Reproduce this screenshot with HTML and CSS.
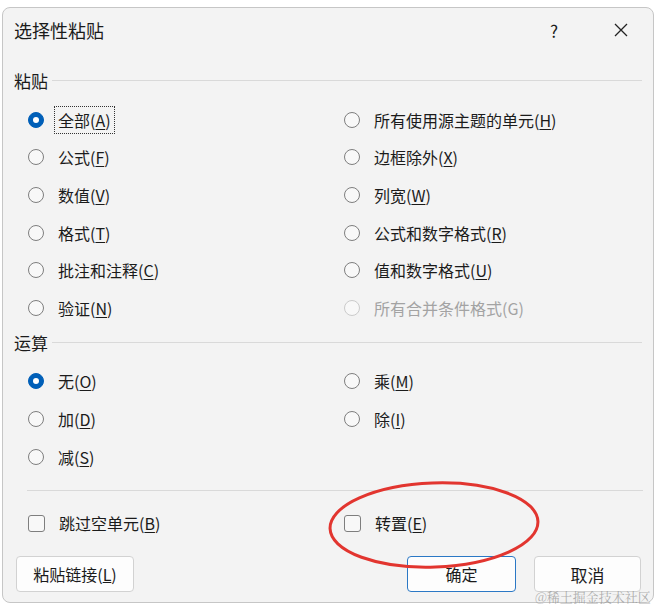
FILE: index.html
```html
<!DOCTYPE html>
<html lang="zh-CN">
<head>
  <meta charset="UTF-8" />
  <title>选择性粘贴</title>
  <link rel="stylesheet" href="styles.css">
</head>
<body>
  <div class="dialog">
    <!-- Title bar -->
    <div class="title-bar">
      <span class="title">选择性粘贴</span>
      <span class="help">?</span>
      <span class="close">
        <svg width="14" height="14" viewBox="0 0 14 14">
          <path d="M1 1 L13 13 M13 1 L1 13" stroke="#222" stroke-width="1.3" fill="none"/>
        </svg>
      </span>
    </div>

    <!-- Paste section -->
    <div class="section-head first">
      <span>粘贴</span>
      <div class="rule"></div>
    </div>
    <div class="options paste">
      <label class="opt"><span class="radio checked"></span><span class="focus">全部(<u>A</u>)</span></label>
      <label class="opt"><span class="radio"></span><span>所有使用源主题的单元(<u>H</u>)</span></label>
      <label class="opt"><span class="radio"></span><span>公式(<u>F</u>)</span></label>
      <label class="opt"><span class="radio"></span><span>边框除外(<u>X</u>)</span></label>
      <label class="opt"><span class="radio"></span><span>数值(<u>V</u>)</span></label>
      <label class="opt"><span class="radio"></span><span>列宽(<u>W</u>)</span></label>
      <label class="opt"><span class="radio"></span><span>格式(<u>T</u>)</span></label>
      <label class="opt"><span class="radio"></span><span>公式和数字格式(<u>R</u>)</span></label>
      <label class="opt"><span class="radio"></span><span>批注和注释(<u>C</u>)</span></label>
      <label class="opt"><span class="radio"></span><span>值和数字格式(<u>U</u>)</span></label>
      <label class="opt"><span class="radio"></span><span>验证(<u>N</u>)</span></label>
      <label class="opt disabled"><span class="radio"></span><span>所有合并条件格式(G)</span></label>
    </div>

    <!-- Operation section -->
    <div class="section-head second">
      <span>运算</span>
      <div class="rule"></div>
    </div>
    <div class="options ops">
      <label class="opt"><span class="radio checked"></span><span>无(<u>O</u>)</span></label>
      <label class="opt"><span class="radio"></span><span>乘(<u>M</u>)</span></label>
      <label class="opt"><span class="radio"></span><span>加(<u>D</u>)</span></label>
      <label class="opt"><span class="radio"></span><span>除(<u>I</u>)</span></label>
      <label class="opt"><span class="radio"></span><span>减(<u>S</u>)</span></label>
    </div>

    <div class="separator"></div>

    <div class="options checks">
      <label class="opt"><span class="check"></span><span>跳过空单元(<u>B</u>)</span></label>
      <label class="opt"><span class="check"></span><span>转置(<u>E</u>)</span></label>
    </div>

    <div class="buttons">
      <button class="btn">粘贴链接(<u>L</u>)</button>
      <div class="spacer"></div>
      <button class="btn primary">确定</button>
      <button class="btn cancel">取消</button>
    </div>

    <!-- Red annotation ellipse -->
    <svg class="mark" width="230" height="110" viewBox="0 0 230 110">
      <ellipse cx="115" cy="56" rx="104" ry="42" transform="rotate(-2 115 56)"
               fill="none" stroke="#e2352f" stroke-width="3"/>
    </svg>
  </div>

  <div class="watermark">@稀土掘金技术社区</div>
</body>
</html>
```

FILE: styles.css
```css
body {
  margin: 0;
  background: #ffffff;
  font-family: "Noto Sans CJK SC", "Noto Sans", sans-serif;
  color: #1b1b1b;
}

.dialog {
  position: relative;
  box-sizing: border-box;
  width: 652px;
  height: 596px;
  margin: 7px 0 0 2px;
  border: 1px solid #c6c6c6;
  border-radius: 8px;
  background: #f3f3f3;
}

/* Title bar */
.title-bar {
  display: flex;
  align-items: center;
  height: 44px;
  padding-left: 11px;
}

.title {
  font-size: 18px;
  flex: 1;
}

.help {
  font-size: 17px;
  width: 20px;
  text-align: center;
  margin-right: 50px;
}

.close {
  display: flex;
  margin-right: 25px;
}

/* Section headers */
.section-head {
  display: flex;
  align-items: center;
  height: 24px;
  padding: 0 11px;
  font-size: 17px;
}

.section-head.first { margin-top: 16px; }
.section-head.second { margin-top: 4px; }

.section-head .rule {
  flex: 1;
  height: 1px;
  margin-left: 4px;
  background: #d9d9d9;
}

/* Option grids */
.options {
  display: grid;
  grid-template-columns: 316px 1fr;
  grid-auto-rows: 37.6px;
  padding-left: 25px;
  font-size: 16px;
}

.options.paste { margin-top: 9px; }
.options.ops { margin-top: 8px; }
.options.checks { margin-top: 14px; grid-auto-rows: 36px; }

.opt {
  display: flex;
  align-items: center;
  gap: 14px;
  white-space: nowrap;
}

.opt u {
  text-underline-offset: 2px;
}

.radio {
  box-sizing: border-box;
  width: 16px;
  height: 16px;
  border: 1.2px solid #7e7e7e;
  border-radius: 50%;
  background: #f8f8f8;
  display: flex;
  align-items: center;
  justify-content: center;
}

.radio.checked {
  background: #005fb8;
  border-color: #005fb8;
}

.radio.checked::after {
  content: "";
  width: 6px;
  height: 6px;
  border-radius: 50%;
  background: #fff;
}

.opt.disabled {
  color: #a3a3a3;
}

.opt.disabled .radio {
  border-color: #cbcbcb;
}

.focus {
  outline: 1px dotted #333;
  padding: 1px 3px;
  margin-left: -3px;
}

.check {
  box-sizing: border-box;
  width: 17px;
  height: 17px;
  border: 1.2px solid #7e7e7e;
  border-radius: 3px;
  background: #f8f8f8;
}

.separator {
  height: 1px;
  margin: 15px 10px 0 24px;
  background: #d9d9d9;
}

/* Bottom buttons */
.buttons {
  display: flex;
  margin-top: 15px;
  padding: 0 12px 0 13px;
  gap: 18px;
}

.spacer { flex: 1; }

.btn {
  box-sizing: border-box;
  height: 36px;
  padding: 0;
  border: 1px solid #d2d2d2;
  border-radius: 4px;
  background: #fdfdfd;
  font-family: inherit;
  font-size: 16px;
  color: #1b1b1b;
}

.btn:first-child { width: 118px; }

.btn.primary {
  width: 109px;
  border: 1.5px solid #2b78c5;
}

.btn.cancel {
  width: 107px;
  font-size: 17px;
}

/* Annotation overlay */
.mark {
  position: absolute;
  left: 316px;
  top: 461px;
}

.watermark {
  position: absolute;
  left: 535px;
  top: 590px;
  font-size: 13px;
  line-height: 14px;
  white-space: nowrap;
  color: rgba(150, 150, 150, 0.75);
  font-family: "Noto Serif CJK SC", "Noto Sans CJK SC", serif;
}
```
